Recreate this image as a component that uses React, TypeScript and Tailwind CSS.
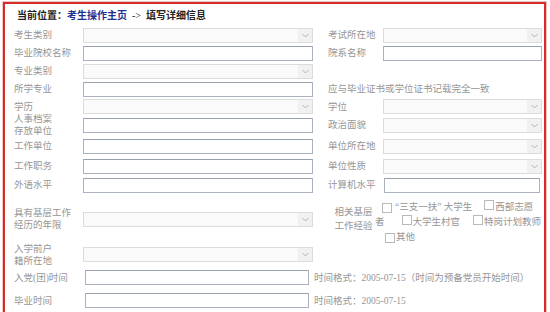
import React from "react";

const font = "font-['Liberation_Serif','Noto_Sans_CJK_SC',serif]";

function Chevron() {
    return (
        <span className="absolute right-0 top-0 flex h-full w-[14px] items-center justify-center bg-[#f1f1f1]">
            <svg width="7" height="5" viewBox="0 0 7 5">
                <polyline points="0.5,1 3.5,4 6.5,1" fill="none" stroke="#b4b4b4" strokeWidth="1" />
            </svg>
        </span>
    );
}

function Select({ className }: { className: string }) {
    return (
        <div className={`relative h-[15px] border border-[#dcdcdc] bg-[#fafafa] ${className}`}>
            <Chevron />
        </div>
    );
}

function Field({ className }: { className: string }) {
    return <input readOnly className={`h-[15px] border border-[#a9b2be] border-t-[#98a2ae] bg-white outline-none ${className}`} />;
}

function Label({ children, className = "w-[69px]" }: { children: React.ReactNode; className?: string }) {
    return <div className={`shrink-0 text-[9.5px] leading-[12px] text-[#969696] ${className}`}>{children}</div>;
}

function Box() {
    return <span className="inline-block h-[10px] w-[10px] shrink-0 border border-[#b9b9b9] bg-white" />;
}

export default function App() {
    return (
        <div className={`h-[312px] w-[550px] overflow-hidden bg-white pl-[3px] pt-[2px] ${font}`}>
            <div className="h-[330px] w-[543px] border-2 border-[#d42b2b] bg-white pl-[9px] shadow-[0_0_0_1px_#f0c4c4]">
                <div className="flex h-[22px] items-center pl-[3px] text-[10px] font-bold text-[#222]">
                    <span>当前位置：</span>
                    <span className="text-[#1f2f8f]">考生操作主页</span>
                    <span className="mx-[5px] font-normal">-&gt;</span>
                    <span>填写详细信息</span>
                </div>

                <div className="flex h-[18px] items-center">
                    <Label>考生类别</Label>
                    <Select className="w-[230px]" />
                    <Label className="ml-[15px] w-[55px]">考试所在地</Label>
                    <Select className="w-[159px]" />
                </div>

                <div className="flex h-[18px] items-center">
                    <Label>毕业院校名称</Label>
                    <Field className="w-[230px]" />
                    <Label className="ml-[15px] w-[55px]">院系名称</Label>
                    <Field className="w-[159px]" />
                </div>

                <div className="flex h-[18px] items-center">
                    <Label>专业类别</Label>
                    <Select className="w-[230px]" />
                </div>

                <div className="flex h-[18px] items-center">
                    <Label>所学专业</Label>
                    <Field className="w-[230px]" />
                    <Label className="ml-[15px] w-[214px]">应与毕业证书或学位证书记载完全一致</Label>
                </div>

                <div className="flex h-[17px] items-center">
                    <Label>学历</Label>
                    <Select className="w-[230px]" />
                    <Label className="ml-[15px] w-[55px]">学位</Label>
                    <Select className="w-[159px]" />
                </div>

                <div className="flex h-[20px] items-center">
                    <Label>
                        人事档案
                        <br />
                        存放单位
                    </Label>
                    <Field className="w-[230px]" />
                    <Label className="ml-[15px] w-[55px]">政治面貌</Label>
                    <Select className="w-[159px]" />
                </div>

                <div className="flex h-[22px] items-center">
                    <Label>工作单位</Label>
                    <Field className="w-[230px]" />
                    <Label className="ml-[15px] w-[55px]">单位所在地</Label>
                    <Select className="w-[159px]" />
                </div>

                <div className="flex h-[18px] items-center">
                    <Label>工作职务</Label>
                    <Field className="w-[230px]" />
                    <Label className="ml-[15px] w-[55px]">单位性质</Label>
                    <Select className="w-[159px]" />
                </div>

                <div className="flex h-[20px] items-center">
                    <Label>外语水平</Label>
                    <Field className="w-[230px]" />
                    <Label className="ml-[15px] w-[56px]">计算机水平</Label>
                    <Field className="w-[156px]" />
                </div>

                <div className="flex h-[48px] items-center">
                    <Label>
                        具有基层工作
                        <br />
                        经历的年限
                    </Label>
                    <Select className="w-[230px]" />
                    <Label className="ml-[19px] w-[43px] text-center leading-[14px]">
                        相关基层
                        <br />
                        工作经验
                    </Label>
                    <div className="self-start pt-[5px] text-[9.5px] leading-[15px] text-[#969696]">
                        <div className="flex h-[15px] items-center whitespace-nowrap pl-[7px]">
                            <Box />
                            <span className="ml-[3px]">“三支一扶” 大学生</span>
                            <span className="ml-[12px]"><Box /></span>
                            <span className="ml-[1px]">西部志愿</span>
                        </div>
                        <div className="flex h-[15px] items-center whitespace-nowrap">
                            <span>者</span>
                            <span className="ml-[17px]"><Box /></span>
                            <span className="ml-[1px]">大学生村官</span>
                            <span className="ml-[13px]"><Box /></span>
                            <span className="ml-[1px]">特岗计划教师</span>
                        </div>
                        <div className="flex h-[15px] items-center whitespace-nowrap pl-[10px]">
                            <Box />
                            <span className="ml-[1px]">其他</span>
                        </div>
                    </div>
                </div>

                <div className="flex h-[23px] items-center">
                    <Label>
                        入学前户
                        <br />
                        籍所在地
                    </Label>
                    <Select className="w-[230px]" />
                </div>

                <div className="flex h-[23px] items-center">
                    <Label className="w-[71px]">入党(团)时间</Label>
                    <Field className="w-[229px]" />
                    <Label className="ml-[5px] w-[230px]">时间格式：2005-07-15（时间为预备党员开始时间）</Label>
                </div>

                <div className="flex h-[23px] items-center">
                    <Label className="w-[71px]">毕业时间</Label>
                    <Field className="w-[229px]" />
                    <Label className="ml-[5px] w-[230px]">时间格式：2005-07-15</Label>
                </div>
            </div>
        </div>
    );
}
